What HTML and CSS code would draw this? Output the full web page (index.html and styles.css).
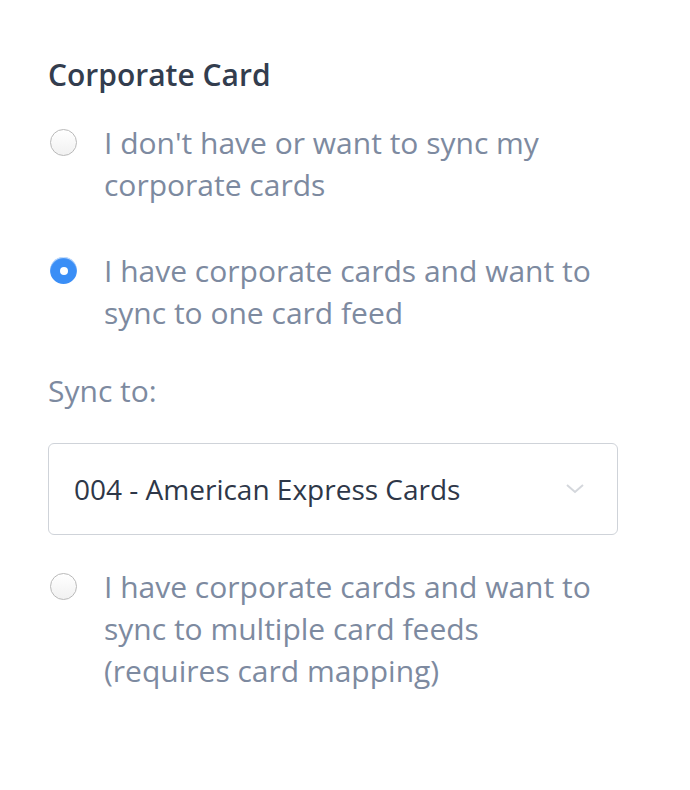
FILE: index.html
```html
<!DOCTYPE html>
<html>
<head>
<meta charset="utf-8">
<link rel="stylesheet" href="styles.css">
</head>
<body>
<div class="panel">
  <h2 class="title">Corporate Card</h2>
  <div class="option">
    <span class="radio"></span>
    <span class="label">I don't have or want to sync my corporate cards</span>
  </div>
  <div class="option option-gap">
    <span class="radio checked"></span>
    <span class="label">I have corporate cards and want to sync to one card feed</span>
  </div>
  <div class="sync-label">Sync to:</div>
  <div class="select">
    <span class="select-text">004 - American Express Cards</span>
    <svg class="chevron" width="20" height="12" viewBox="0 0 20 12"><path d="M2 2 L10 9 L18 2" fill="none" stroke="#d4d7dc" stroke-width="2"/></svg>
  </div>
  <div class="option">
    <span class="radio"></span>
    <span class="label">I have corporate cards and want to sync to multiple card feeds<br>(requires card mapping)</span>
  </div>
</div>
</body>
</html>
```

FILE: styles.css
```css
html, body {
  margin: 0;
  padding: 0;
  background: #ffffff;
}
body {
  font-family: "Open Sans", "Liberation Sans", sans-serif;
}
.panel {
  padding: 57px 0 0 48px;
  width: 570px;
}
.title {
  margin: 0 0 29px 0;
  font-size: 30px;
  line-height: 36px;
  font-weight: 600;
  color: #333d4e;
}
.option {
  display: flex;
  align-items: flex-start;
  gap: 27px;
  padding-left: 2px;
}
.option-gap {
  margin-top: 44px;
}
.radio {
  flex: none;
  width: 27px;
  height: 27px;
  margin-top: 7px;
  border-radius: 50%;
  box-sizing: border-box;
  border: 1px solid #b9b9b9;
  background: linear-gradient(#ffffff, #f1f1f1);
  box-shadow: inset 0 1px 1px rgba(255,255,255,0.8);
  position: relative;
}
.radio.checked {
  border: none;
  background: #3a8ef6;
}
.radio.checked::after {
  content: "";
  position: absolute;
  left: 9.5px;
  top: 9.5px;
  width: 8px;
  height: 8px;
  border-radius: 50%;
  background: #ffffff;
}
.label {
  font-size: 30px;
  line-height: 42px;
  color: #7d8aa0;
  width: 500px;
}
.sync-label {
  margin-top: 36px;
  font-size: 30px;
  line-height: 42px;
  color: #7d8aa0;
}
.select {
  margin-top: 31px;
  margin-bottom: 31px;
  height: 92px;
  box-sizing: border-box;
  border: 1px solid #cfd3d9;
  border-radius: 6px;
  display: flex;
  align-items: center;
  justify-content: space-between;
  padding: 0 32px 0 25px;
}
.select-text {
  font-size: 28px;
  color: #2e3748;
}
.chevron {
  display: block;
}
```
